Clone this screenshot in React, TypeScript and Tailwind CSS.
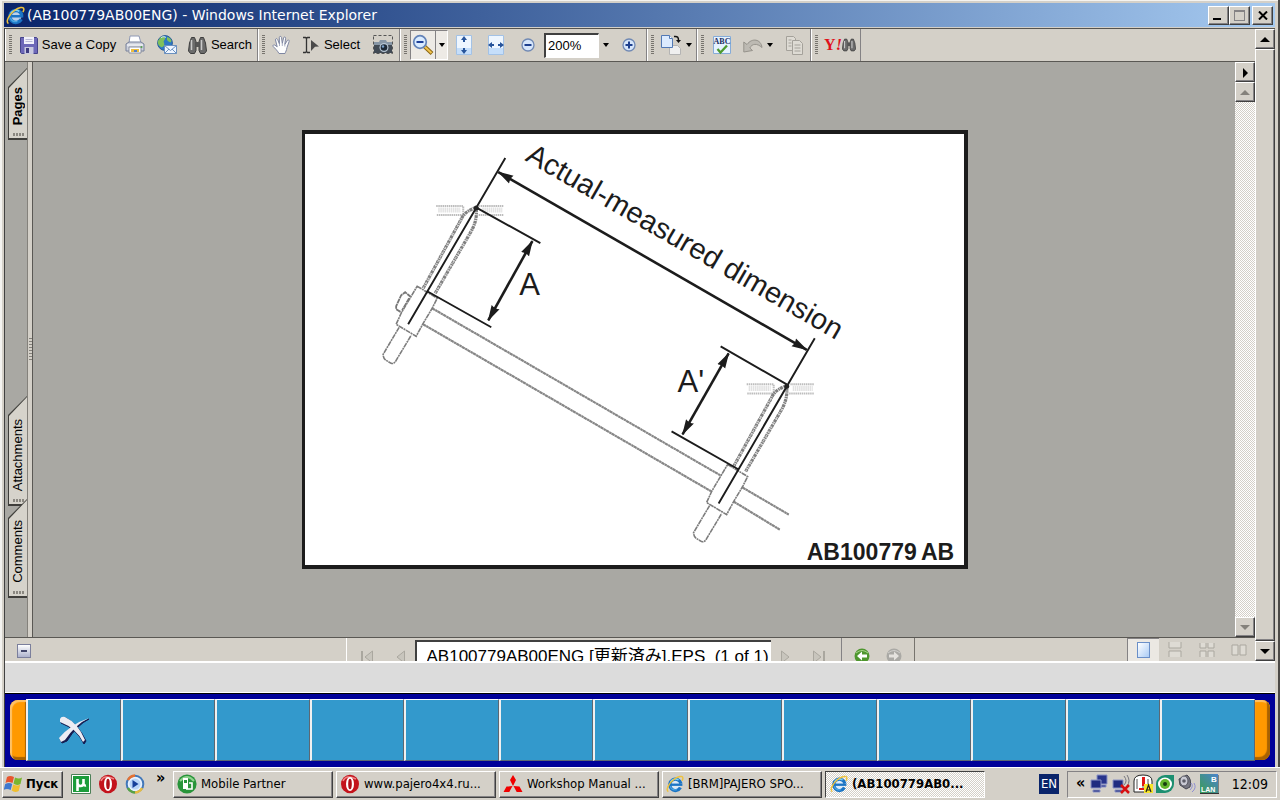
import type { ReactNode } from "react";

const raised =
  "border border-t-white border-l-white border-r-[#404040] border-b-[#404040] shadow-[inset_-1px_-1px_0_#848284] bg-[#d4d0c8]";
const uiFont = "font-['DejaVu_Sans_Condensed','DejaVu_Sans',sans-serif]";
const stipple =
  "bg-[repeating-conic-gradient(#d4d0c8_0_25%,#ffffff_0_50%)] bg-[length:2px_2px]";

function IeIcon({ size = 20 }: { size?: number }) {
  return (
    <svg width={size} height={size} viewBox="0 0 20 20" fill="none" className="shrink-0">
      <circle cx="10.300" cy="10.500" r="6" fill="#dcefff" fillOpacity=".85" />
      <path d="M16 14A6.300 6.300 0 1 1 16.600 9.600" stroke="#1b74c4" strokeWidth="3.600" />
      <path d="M5.500 10.800H18.200" stroke="#1b74c4" strokeWidth="2.600" />
      <path d="M5 7.600C7 4.400 11 3.400 14 5.600" stroke="#7fd0f5" strokeWidth="1.500" />
      <path d="M4.600 12.500C6 15.800 9 17 12 16.200" stroke="#4ba6e2" strokeWidth="1.400" />
      <path d="M2.600 18.400C-.6 16.600 3 9.200 8.600 5 13.400 1.400 18.600 .4 18.800 3.200c.1 1-.3 2-1 3.200" stroke="#eec23c" strokeWidth="1.600" />
    </svg>
  );
}

function Floppy() {
  return (
    <svg width="18" height="18" viewBox="0 0 18 18">
      <path d="M.5 1.500h16l1 1v15H1.500l-1-1z" fill="#6d68b8" stroke="#45438a" />
      <path d="M4 1h10v7H4z" fill="#f2f2fb" />
      <path d="M5.500 3.500h7M5.500 5.500h7" stroke="#b9b9d8" />
      <path d="M4.500 11h9v7h-9z" fill="#c9c9df" />
      <path d="M6 12h3v5H6z" fill="#3d3b80" />
    </svg>
  );
}

function Printer() {
  return (
    <svg width="20" height="20" viewBox="0 0 20 20">
      <path d="M5 1h9l2 7H4z" fill="#fff" stroke="#8f99b5" />
      <path d="M1 9l3-2h12l3 2v7H1z" fill="#cdd1dc" stroke="#77809a" />
      <path d="M2 10h16" stroke="#fff" />
      <path d="M4 12h12v6H4z" fill="#fff" stroke="#8a8f9f" />
      <path d="M6 14h8v3H6z" fill="#edbd3c" />
      <path d="M9 15h3v2H9z" fill="#5580c6" />
      <circle cx="16.500" cy="12" r="1" fill="#54a04b" />
    </svg>
  );
}

function GlobeMail() {
  return (
    <svg width="20" height="20" viewBox="0 0 20 20">
      <circle cx="8" cy="8" r="7.400" fill="#2c78c4" stroke="#285c98" />
      <path d="M3 3c3-3 6-1 5 1s-2 2-1 4-1 5-3 4S0 8 1 6zM10 2c4 1 5 4 4 5s-3-1-4-2z" fill="#7fc05b" />
      <path d="M4 2.500c2-1 4-1 5 0" stroke="#d8f1ff" fill="none" />
      <path d="M7.500 10.500h12v8h-12z" fill="#eef5ff" stroke="#6a90bf" />
      <path d="M7.500 10.500l6 5 6-5M7.500 18.500l4.500-4.500M19.500 18.500L15 14" fill="none" stroke="#6a90bf" />
    </svg>
  );
}

function Binoculars({ size = 19 }: { size?: number }) {
  return (
    <svg width={size} height={size} viewBox="0 0 19 19">
      <path d="M3.500 1.500h3l1.500 4v9l-1.500 3h-4l-2-2.500 1-8z" fill="#6b6b6b" stroke="#3d3d3d" />
      <path d="M12.500 1.500h3l2 5.500 1 8-2 2.500h-4l-1.500-3v-9z" fill="#6b6b6b" stroke="#3d3d3d" />
      <path d="M8 6h3v5H8z" fill="#555" />
      <path d="M3.500 4v10M13.500 4v10" stroke="#c9c9c9" strokeWidth="1.500" />
    </svg>
  );
}

function Hand() {
  return (
    <svg width="20" height="20" viewBox="0 0 20 20">
      <path
        d="M7 18.500C5 15 3 13.500 1.200 11.500c-.8-1.300.7-2.200 1.800-1.300l2.200 1.600L3.500 5c-.3-1.500 1.600-1.900 2.100-.6l1.800 4.400L7.300 2.500c0-1.500 2-1.500 2.200 0l.8 6 1.300-5.700c.4-1.400 2.200-1 2 .5l-.8 6.200 2.500-4c.8-1.200 2.300-.3 1.800 1L15 12.500c-.4 3-1.500 4.500-2 6z"
        fill="#fdfdfd"
        stroke="#7e86a2"
      />
      <path d="M7.500 9v2M10.300 9v2M12.800 9.500v2" stroke="#a9afc4" />
    </svg>
  );
}

function SelectIcon() {
  return (
    <svg width="18" height="18" viewBox="0 0 18 18">
      <path d="M1 1.500h2.500l1 1 1-1H8M1 16.500h2.500l1-1 1 1H8M4.500 2v14" fill="none" stroke="#333" strokeWidth="1.300" />
      <path d="M9 4l8 6.500-4 .3L9 15z" fill="#4a4a4a" />
    </svg>
  );
}

function Camera() {
  return (
    <svg width="20" height="20" viewBox="0 0 20 20">
      <rect x=".5" y=".5" width="19" height="18" fill="none" stroke="#555" strokeDasharray="3 2" />
      <path d="M1 7h5l1-2h6l1 2h5v11H1z" fill="#8796a6" />
      <path d="M1 10h18v8H1z" fill="#414a55" />
      <circle cx="11" cy="12.500" r="4.500" fill="#b8c7d6" />
      <circle cx="11" cy="12.500" r="3.300" fill="#1d2937" />
      <circle cx="10" cy="11.500" r="1.200" fill="#7ba2cd" />
    </svg>
  );
}

function ZoomOut() {
  return (
    <svg width="22" height="22" viewBox="0 0 22 22">
      <path d="M12 12l8 7.500" stroke="#8a6510" strokeWidth="4" />
      <path d="M12 12l7.500 7" stroke="#f1c34f" strokeWidth="2" />
      <circle cx="8" cy="8" r="6.300" fill="#d9ebff" stroke="#6383b8" strokeWidth="1.700" />
      <path d="M4.500 8h7" stroke="#1d3f98" strokeWidth="2" />
    </svg>
  );
}

function FitPage({ wide = false }: { wide?: boolean }) {
  return (
    <svg width="18" height="20" viewBox="0 0 18 20">
      <path d="M1.500.5h15v19h-15z" fill="#eef6ff" stroke="#a3c2e6" />
      <path d="M2 13h14v6H2z" fill="#c5defa" />
      {wide ? (
        <path d="M1 10l4-3v2h2v2H5v2zM17 10l-4-3v2h-2v2h2v2z" fill="#27549b" />
      ) : (
        <path d="M9 1L6 5h2v2h2V5h2zM9 19l-3-4h2v-2h2v2h2z" fill="#27549b" />
      )}
    </svg>
  );
}

function RoundSign({ plus = false }: { plus?: boolean }) {
  return (
    <svg width="14" height="14" viewBox="0 0 14 14">
      <circle cx="7" cy="7" r="6" fill="#d6e6fb" stroke="#7089b4" strokeWidth="1.300" />
      <path d={plus ? "M3.500 7h7M7 3.500v7" : "M3.500 7h7"} stroke="#1d3f8e" strokeWidth="2" />
    </svg>
  );
}

function PageTurn() {
  return (
    <svg width="22" height="20" viewBox="0 0 22 20">
      <path d="M9.500 10.500h8l3 3v6h-11z" fill="#efefef" stroke="#b4b4b4" />
      <path d="M1.500.5h8l3 3v9h-11z" fill="#dcebff" stroke="#5279b5" />
      <path d="M9.500.5v3h3" fill="#fff" stroke="#5279b5" />
      <path d="M14 1.500c4-.5 4.500 1 4.500 4" fill="none" stroke="#111" strokeWidth="1.500" />
      <path d="M16 5h5l-2.500 3z" fill="#111" />
    </svg>
  );
}

function SpellCheck() {
  return (
    <svg width="20" height="20" viewBox="0 0 20 20">
      <path d="M1.500 1.500h17v17h-17z" fill="#e6f2ff" stroke="#86acd9" />
      <text x="10" y="9" textAnchor="middle" className="font-['Liberation_Serif',serif] text-[8px] font-bold" fill="#222e60">
        ABC
      </text>
      <path d="M5.500 14l3 3.500 6.500-7" fill="none" stroke="#4d9a2f" strokeWidth="2.300" />
    </svg>
  );
}

function Undo() {
  return (
    <svg width="20" height="16" viewBox="0 0 20 16">
      <path d="M.8 5v10l8.700-1.500-2.700-2.500C9 6.500 14 6 19 10.500 18 2 9 .5 4 7.500z" fill="#bdbab3" stroke="#96938c" />
    </svg>
  );
}

function CopyIcon() {
  return (
    <svg width="18" height="19" viewBox="0 0 18 19">
      <path d="M1.500.5h7l2 2v12h-9z" fill="#dedbd4" stroke="#a4a19a" />
      <path d="M7.500 4.500h7l3 3v11h-10z" fill="#dedbd4" stroke="#a4a19a" />
      <path d="M3.500 4h3M3.500 7h3M3.500 10h3M9.500 9h6M9.500 12h6M9.500 15h6" stroke="#a4a19a" />
    </svg>
  );
}

function Caret() {
  return <span className="border-x-[3px] border-t-[4px] border-x-transparent border-t-black" />;
}

function Grip() {
  return (
    <span className="mx-[3px] h-5 w-[3px] shrink-0 bg-[repeating-linear-gradient(to_bottom,#77746e_0_1px,transparent_1px_2px)]" />
  );
}

function Tool({ label, className, children }: { label: string; className: string; children: ReactNode }) {
  return (
    <button type="button" aria-label={label} className={`flex h-7 shrink-0 items-center justify-center ${className}`}>
      {children}
    </button>
  );
}

function Group({ className, children }: { className: string; children: ReactNode }) {
  return (
    <div className={`flex h-full shrink-0 items-center border-r border-l border-r-[#848284] border-l-white ${className}`}>
      {children}
    </div>
  );
}

function Toolbar() {
  return (
    <div className="flex h-[34px] shrink-0 items-center border-t border-b border-t-[#55534f] border-b-[#5a5854] font-['Liberation_Sans',sans-serif] text-[13px]">
      <Group className="w-[253px]">
        <Grip />
        <Tool label="Save a Copy" className="w-[106px] gap-1">
          <Floppy />
          <span className="whitespace-nowrap">Save a Copy</span>
        </Tool>
        <Tool label="Print" className="w-7"><Printer /></Tool>
        <Tool label="Email" className="w-9"><GlobeMail /></Tool>
        <Tool label="Search" className="w-[70px] gap-1">
          <Binoculars />
          <span>Search</span>
        </Tool>
      </Group>
      <Group className="w-[142px]">
        <Grip />
        <Tool label="Hand tool" className="w-[28px]"><Hand /></Tool>
        <Tool label="Select" className="w-[70px] gap-1">
          <SelectIcon />
          <span>Select</span>
        </Tool>
        <Tool label="Snapshot" className="w-[34px]"><Camera /></Tool>
      </Group>
      <Group className="w-[247px]">
        <Grip />
        <div className="flex shrink-0 border border-t-[#848284] border-r-white border-b-white border-l-[#848284] bg-[#edeae5]">
          <Tool label="Zoom out tool" className="w-[25px] border-r border-[#848284]"><ZoomOut /></Tool>
          <Tool label="Zoom tools" className="w-[11px]"><Caret /></Tool>
        </div>
        <Tool label="Fit page" className="w-8"><FitPage /></Tool>
        <Tool label="Fit width" className="w-8"><FitPage wide /></Tool>
        <Tool label="Zoom out" className="w-8"><RoundSign /></Tool>
        <input
          aria-label="Zoom level"
          defaultValue="200%"
          className="h-[25px] w-[55px] shrink-0 border border-t-2 border-l-2 border-t-[#404040] border-r-white border-b-white border-l-[#404040] bg-white px-0.5 text-[13px]"
        />
        <Tool label="Zoom levels" className="w-[13px]"><Caret /></Tool>
        <Tool label="Zoom in" className="w-[34px]"><RoundSign plus /></Tool>
      </Group>
      <Group className="w-[50px]">
        <Grip />
        <Tool label="Rotate view" className="w-[37px] gap-1"><PageTurn /><Caret /></Tool>
      </Group>
      <Group className="w-[114px]">
        <Grip />
        <Tool label="Check spelling" className="w-[30px]"><SpellCheck /></Tool>
        <Tool label="Undo" className="w-[41px] gap-1"><Undo /><Caret /></Tool>
        <Tool label="Copy" className="w-8"><CopyIcon /></Tool>
      </Group>
      <Group className="w-[50px]">
        <Grip />
        <Tool label="Yahoo search" className="w-[38px]">
          <span className="font-['Liberation_Serif',serif] text-base font-bold text-[#e0101c]">Y<i>!</i></span>
          <Binoculars size={14} />
        </Tool>
      </Group>
    </div>
  );
}

function Arrow({ dir, muted = false }: { dir: "up" | "down" | "right"; muted?: boolean }) {
  const d = { up: "M0 5l5-5 5 5z", down: "M0 0h10L5 5z", right: "M3-2l5 5-5 5z" }[dir];
  return (
    <svg width="10" height="5" viewBox="0 0 10 5" className="overflow-visible">
      <path d={d} fill={muted ? "#84817b" : "#000"} />
    </svg>
  );
}

function ScrollButton({ dir, muted, label }: { dir: "up" | "down" | "right"; muted?: boolean; label: string }) {
  return (
    <button type="button" aria-label={label} className={`flex h-5 w-full shrink-0 items-center justify-center ${raised}`}>
      <Arrow dir={dir} muted={muted} />
    </button>
  );
}

function SideTab({ label, className }: { label: string; className: string }) {
  return (
    <button
      type="button"
      className={`flex w-[19px] shrink-0 bg-[#3f3e3b] p-px pr-0 pb-0.5 [clip-path:polygon(0_19px,100%_0,100%_100%,0_100%)] ${className}`}
    >
      <span className="flex h-full w-full flex-col items-center justify-end bg-[#d6d3cb] [clip-path:polygon(0_19px,100%_0,100%_100%,0_100%)]">
        <span className="rotate-180 pt-2 text-[13px] leading-4 [writing-mode:vertical-rl]">{label}</span>
        <span className="mb-0.5 h-[3px] w-[11px] bg-[repeating-linear-gradient(to_right,#8a8780_0_2px,transparent_2px_3px)]" />
      </span>
    </button>
  );
}

function Clamp() {
  return (
    <g fill="none" stroke="#7c7c7c" strokeWidth="1.600" strokeDasharray="5 .6 2 .6">
      <g stroke="#bdbdbd" strokeWidth="2" strokeDasharray="1.500 .6">
        <path d="M436 206h27v9h-27M503 206h-24M503 215h-25" />
        <path d="M438 210h22M482 210h20" stroke="#e2e2e2" strokeWidth="5" />
      </g>
      <path d="M423 288L461 219q3-7 13-11M435 293L471 231q6-11 5-21" stroke="#808080" strokeWidth="3.200" strokeDasharray="3 .7 1.500 .5" />
      <path d="M423 288L461 219M435 293L471 231" stroke="#d2d2d2" strokeWidth="1" strokeDasharray="2 3" />
      <path d="M399 327l-16 27q0 4 3 6l5 3q3 1 5-3l15-25" fill="#fff" />
      <path d="M417 286l20 12-5 10-9 15-7 13-20-12 5-11 10-17z" fill="#fff" />
    </g>
  );
}

function Measure({ d }: { d: string }) {
  return <path d={d} fill="none" stroke="#1c1c1c" strokeWidth="2.600" markerStart="url(#tip)" markerEnd="url(#tip)" />;
}

function Diagram() {
  return (
    <svg viewBox="305 134 658 431" className="block w-full" role="img" aria-label="Actual-measured dimension">
      <defs>
        <marker id="tip" orient="auto-start-reverse" markerUnits="userSpaceOnUse" markerWidth="16" markerHeight="10" refX="15" refY="5" viewBox="0 0 16 10">
          <path d="M0 .5L16 5 0 9.500q2-4.500 0-9z" fill="#1c1c1c" />
        </marker>
      </defs>
      <g strokeWidth="2">
        <path d="M432 308L720 475M423 324L711 491M742 487l46 27M733 501l46 28" stroke="#bcbcbc" />
        <path d="M432 308L720 475M423 324L711 491M742 487l46 27M733 501l46 28" stroke="#868686" strokeDasharray="3 .8 2 .6" />
      </g>
      <path d="M411 297l-6-5-4 3-5 11 0 3 5 3 3 2M409 298l-7 12" fill="none" stroke="#777" strokeWidth="1.800" strokeDasharray="5 .6" />
      <Clamp />
      <g transform="translate(310 178)"><Clamp /></g>
      <g stroke="#1c1c1c" strokeWidth="1.900">
        <path d="M505 158L408 324M477 208l63 35M427 291l64 36M814 338L718 503M720 346l66 38M671 431l67 38" />
      </g>
      <circle cx="476" cy="208" r="2.500" fill="#222" />
      <circle cx="786" cy="386" r="2.500" fill="#222" />
      <Measure d="M498 172L806 349.500" />
      <Measure d="M532 241L488 320" />
      <Measure d="M728 353L682 434" />
      <g fill="#1c1c1c" className="font-['Liberation_Sans',sans-serif]">
        <text transform="translate(524 160) rotate(30)" className="text-[29px]">Actual-measured dimension</text>
        <text x="519" y="295" className="text-[31px]">A</text>
        <text x="677" y="392" className="text-[31px]">A'</text>
        <text x="806" y="559" className="text-[23px] font-bold">AB100779</text>
        <text x="920" y="559" className="text-[23px] font-bold">AB</text>
      </g>
    </svg>
  );
}

function PageNav({ flip = false, bar = false, label }: { flip?: boolean; bar?: boolean; label: string }) {
  return (
    <button type="button" aria-label={label} className={`flex w-8 justify-center ${flip ? "-scale-x-100" : ""}`}>
      <svg width="14" height="14" viewBox="0 0 14 14">
        {bar && <path d="M1 1h2v12H1z" fill="#aaa79f" />}
        <path d="M12.500 1v12L5 7z" fill="#c8c5bd" stroke="#aaa79f" />
      </svg>
    </button>
  );
}

function RoundArrow({ back = false }: { back?: boolean }) {
  return (
    <button type="button" aria-label={back ? "Previous view" : "Next view"} className={`flex w-8 justify-center ${back ? "" : "-scale-x-100"}`}>
      <svg width="16" height="16" viewBox="0 0 16 16">
        <circle cx="8" cy="8" r="7.500" fill={back ? "#4e962e" : "#aaa9a5"} />
        <path d="M2 5q6-5 12 0" fill="none" stroke={back ? "#a6d488" : "#cfcecb"} />
        <path d="M3 8l5-4.500v3h5v3H8v3z" fill={back ? "#fff" : "#e4e2de"} />
      </svg>
    </button>
  );
}

const layouts = [
  { label: "Continuous", d: "M2 0v6h12V0M2 15V9h12v6" },
  { label: "Continuous facing", d: "M1 1v5h6V1M9 1v5h6V1M1 15V9h6v6M9 15V9h6v6" },
  { label: "Facing", d: "M1 3h6v10H1zM9 3h6v10H9z" },
];

function StatusBar() {
  return (
    <div className="flex h-6 shrink-0 overflow-hidden border-t border-[#5a5854] bg-[#d4d0c8]">
      <div className="flex min-w-0 flex-1 basis-0 items-start">
        <button type="button" aria-label="Hide pane" className="mt-1.5 ml-3 flex size-[14px] items-center justify-center border border-[#7b7f9c] bg-gradient-to-b from-white to-[#adb2cc]">
          <span className="h-0.5 w-1.5 bg-[#42466a]" />
        </button>
      </div>
      <div className="flex shrink-0 items-start border-x border-r-[#77746e] border-l-white">
        <div className="flex pt-3 pl-1">
          <PageNav label="First page" bar />
          <PageNav label="Previous page" />
        </div>
        <input
          aria-label="Current page"
          readOnly
          defaultValue="AB100779AB00ENG [更新済み].EPS  (1 of 1)"
          className="mt-0.5 h-[26px] w-[356px] border-t-2 border-l-2 border-[#404040] bg-white pl-2.5 font-['Liberation_Sans','Noto_Sans_CJK_JP',sans-serif] text-[17px] leading-6"
        />
        <div className="flex pt-3">
          <PageNav label="Next page" flip />
          <PageNav label="Last page" flip bar />
        </div>
        <div className="ml-1.5 flex border-l border-[#848284] pt-2.5 pl-1 pr-1">
          <RoundArrow back />
          <RoundArrow />
        </div>
      </div>
      <div className="flex min-w-0 flex-1 basis-0 justify-end">
        <button type="button" aria-label="Single page" className="flex w-8 items-center justify-center border-t border-l border-[#848284] bg-[#ebe8e3]">
          <span className="h-4 w-[13px] border border-[#6a8fc8] bg-gradient-to-br from-white to-[#abccf5]" />
        </button>
        {layouts.map((l) => (
          <button key={l.label} type="button" aria-label={l.label} className="flex w-8 items-center justify-center">
            <svg width="16" height="16" viewBox="0 0 16 16">
              <path d={l.d} fill="#dedbd4" stroke="#aaa79f" />
            </svg>
          </button>
        ))}
      </div>
    </div>
  );
}

function TitleBar() {
  return (
    <div className="flex h-6 shrink-0 items-center bg-gradient-to-r from-[#0a246a] to-[#a6caf0] px-0.5 text-white">
      <IeIcon size={19} />
      <h1 className="ml-0.5 flex-1 font-['DejaVu_Sans',sans-serif] text-[14px] leading-5">
        (AB100779AB00ENG) - Windows Internet Explorer
      </h1>
      <button type="button" aria-label="Minimize" className={`flex h-[19px] w-[21px] items-end pb-1 pl-1 ${raised}`}>
        <span className="h-0.5 w-2 bg-black" />
      </button>
      <button type="button" aria-label="Maximize" className={`mr-0.5 flex h-[19px] w-[21px] items-center justify-center ${raised}`}>
        <span className="size-[11px] border border-t-2 border-[#848284]" />
      </button>
      <button type="button" aria-label="Close" className={`flex h-[19px] w-[21px] items-center justify-center ${raised}`}>
        <svg width="10" height="9" viewBox="0 0 10 9">
          <path d="M1 .5l8 8M9 .5l-8 8" stroke="#000" strokeWidth="2" />
        </svg>
      </button>
    </div>
  );
}

function CommandStrip() {
  return (
    <div className="flex h-[74px] shrink-0 border-t border-black bg-[#000099] px-[5px] pt-[5px] pb-1.5">
      <span className="my-px w-4 shrink-0 rounded-l-lg bg-[#ff9900] shadow-[inset_2px_2px_1px_#ffc266,inset_-1px_-3px_1px_#a86200]" />
      <div className="grid flex-1 grid-cols-13">
        {Array.from({ length: 13 }, (_, i) => (
          <button
            key={i}
            type="button"
            aria-label={i === 0 ? "Close" : `Command ${i + 1}`}
            className="flex items-center justify-center border-t border-r border-b border-l-2 border-t-white border-r-[#5b6873] border-b-[#5b6873] border-l-[#f0f0f0] bg-[#3399cc]"
          >
            {i === 0 && (
              <svg width="32" height="30" viewBox="0 0 32 30">
                <path d="M3 5Q4 2 8 3q12 6 20 23l-2 3Q19 14 3 8zM31 4Q19 10 9 26l-5 2-2-4Q14 10 31 4z" fill="#151b50" stroke="#151b50" />
                <path d="M2 4Q3 1 7 2q13 6 20 23l-2 2Q18 13 2 7zM31 3Q18 9 7 25l-4 2-2-4Q13 9 31 3z" fill="#ececf3" />
              </svg>
            )}
          </button>
        ))}
      </div>
      <span className="my-px w-[15px] shrink-0 rounded-r-lg bg-[#ff9900] shadow-[inset_-3px_-3px_1px_#a86200,inset_0_2px_1px_#ffc266]" />
    </div>
  );
}

function OperaIcon() {
  return (
    <svg width="20" height="20" viewBox="0 0 20 20" className="shrink-0">
      <ellipse cx="10" cy="10" rx="9" ry="9.300" fill="#c4131c" />
      <path d="M3 7q3-7 13-2" fill="none" stroke="#ef8585" strokeWidth="1.500" />
      <ellipse cx="10" cy="10" rx="4" ry="7" fill="#fff" />
      <ellipse cx="10" cy="10" rx="1.800" ry="5.300" fill="#b00f18" />
    </svg>
  );
}

function MobileIcon() {
  return (
    <svg width="20" height="20" viewBox="0 0 20 20" className="shrink-0">
      <circle cx="10" cy="10" r="9.600" fill="#28943a" />
      <path d="M3 7q7-8 14 0" fill="none" stroke="#8ed38e" strokeWidth="2" />
      <path d="M6 4h5v11H6z" fill="#fff" />
      <path d="M7 6h3v3H7z" fill="#28943a" />
      <path d="M12 9h3v6H9" fill="none" stroke="#fff" strokeWidth="1.600" />
    </svg>
  );
}

function MitsubishiIcon() {
  return (
    <svg width="20" height="20" viewBox="0 0 20 20" className="shrink-0" fill="#f00000">
      <path d="M10 1l3 5-3 6-3-6zM9.500 12l-3.200 6H.5l3-5.500zM10.500 12l6 .5 3 5.500h-5.800z" />
    </svg>
  );
}

const tasks = [
  { label: "Mobile Partner", icon: <MobileIcon /> },
  { label: "www.pajero4x4.ru...", icon: <OperaIcon /> },
  { label: "Workshop Manual ...", icon: <MitsubishiIcon /> },
  { label: "[BRM]PAJERO SPO...", icon: <IeIcon size={18} /> },
  { label: "(AB100779AB0...", icon: <IeIcon size={18} />, active: true },
];

function Monitors({ off = false }: { off?: boolean }) {
  return (
    <svg width="20" height="20" viewBox="0 0 20 20">
      {off ? (
        <path d="M13 2q4 5 0 9M16 1q4 6 0 11" fill="none" stroke="#77777f" />
      ) : (
        <path d="M8 1h10v9H8zM11 11h6v2h-6z" fill="#29358c" stroke="#8b93c4" />
      )}
      <path d="M2 6h10v8H2zM4 16h7v2H4z" fill="#202c80" stroke="#8b93c4" />
      {off && <path d="M10 11l8 8M18 11l-8 8" stroke="#d81010" strokeWidth="2.500" />}
    </svg>
  );
}

function TrayIcons() {
  return (
    <div className="flex items-center gap-0.5">
      <Monitors />
      <Monitors off />
      <svg width="20" height="20" viewBox="0 0 20 20">
        <path d="M1 18V7q0-6 9-6t9 6v11z" fill="#fff" stroke="#222" />
        <path d="M4 15V5M15 12V5M10 5v9" stroke="#555" />
        <path d="M9 3h3v9H9zM6 14h5v2H6z" fill="#e01818" />
        <path d="M11 10h9v9h-9z" fill="#f7e529" />
        <path d="M13 18l2.500-7 2.500 7M14 16h3" fill="none" stroke="#222" strokeWidth="1.200" />
      </svg>
      <svg width="20" height="20" viewBox="0 0 20 20">
        <path d="M1 10a9 9 0 0 1 9-9h9v9a9 9 0 0 1-9 9H1z" fill="#1d8f70" />
        <ellipse cx="10" cy="10" rx="7" ry="6.500" fill="#fff" />
        <circle cx="10" cy="10" r="5" fill="#62b62c" />
        <circle cx="10" cy="10" r="2" fill="#173c10" />
      </svg>
      <svg width="20" height="20" viewBox="0 0 20 20">
        <path d="M2 5l8-4q5 4 3 12l-4 2-6-4z" fill="#777782" stroke="#454550" />
        <ellipse cx="7" cy="7" rx="4" ry="5" fill="#c9c9d3" stroke="#55555f" />
        <circle cx="7" cy="7" r="1.800" fill="#5d5d68" />
        <path d="M14 9q3 3-1 7M17 9q3 5-2 9" fill="none" stroke="#8e8ed2" />
      </svg>
      <svg width="20" height="20" viewBox="0 0 20 20">
        <defs>
          <linearGradient id="lan" x1="0" y1="1" x2="1" y2="0">
            <stop offset="0" stopColor="#3a9c55" />
            <stop offset="1" stopColor="#4b83cc" />
          </linearGradient>
        </defs>
        <path d="M1 0h18v19H1z" fill="url(#lan)" />
        <path d="M1 19.500h19V1" fill="none" stroke="#333" />
        <g fill="#fff" className="font-['Liberation_Sans',sans-serif] font-bold">
          <text x="12" y="8" className="text-[8px]">B</text>
          <text x="2" y="18" className="text-[7px]">LAN</text>
        </g>
      </svg>
    </div>
  );
}

function Taskbar() {
  return (
    <footer className={`flex h-[33px] shrink-0 items-center border-t border-white bg-[#d4d0c8] pr-0.5 pl-0.5 ${uiFont} text-[14px]`}>
      <button type="button" className={`flex h-[27px] w-[61px] shrink-0 items-center gap-0.5 px-px font-bold ${raised}`}>
        <svg width="20" height="20" viewBox="0 0 20 20" className="shrink-0">
          <path d="M3 3q3-2 7 0L8.500 9q-4-2-7 0z" fill="#e8552d" />
          <path d="M11 3.500q4 2 7 0L16.500 10q-4 2-7-.5z" fill="#79b62f" />
          <path d="M1.200 10q4-2 7 0L6.700 16q-4-2-7 0z" fill="#3f79cf" />
          <path d="M9.200 10.500q4 2 7 .3L14.700 17q-4 2-7-.5z" fill="#f0bf2f" />
        </svg>
        <span className="text-[13px]">Пуск</span>
      </button>
      <nav aria-label="Quick launch" className="ml-2 flex w-[102px] shrink-0 items-center gap-[7px]">
        <button type="button" aria-label="Torrents">
          <svg width="20" height="20" viewBox="0 0 20 20">
            <path d="M.5.500h19v19H.5z" fill="#fff" stroke="#4c8057" />
            <path d="M2 2h16v16H2z" fill="#1c9c3a" />
            <path d="M6.500 17V5M6.500 5v4q0 3 3 3t3-3V5M12.500 9q0 3 2.500 2.500" fill="none" stroke="#fff" strokeWidth="2.600" />
          </svg>
        </button>
        <button type="button" aria-label="Opera"><OperaIcon /></button>
        <button type="button" aria-label="Media player">
          <svg width="20" height="20" viewBox="0 0 20 20">
            <circle cx="10" cy="10" r="8.300" fill="#e8f2ff" stroke="#4278b9" strokeWidth="2" />
            <path d="M3 6q2-4 7-4.500" fill="none" stroke="#e57132" strokeWidth="2.500" />
            <path d="M3 14q2 4 7 4.500" fill="none" stroke="#58a344" strokeWidth="2.500" />
            <path d="M17 14q-2 4-7 4.500" fill="none" stroke="#e7bc3e" strokeWidth="2.500" />
            <circle cx="10" cy="10" r="5.500" fill="#b9d5f7" />
            <path d="M7.500 6l6 4-6 4z" fill="#153f9a" />
          </svg>
        </button>
        <button type="button" aria-label="More shortcuts" className="-mt-3 ml-1 text-base leading-4 font-bold">»</button>
      </nav>
      <div className="flex min-w-0 flex-1 gap-[3px]">
        {tasks.map((t) => (
          <button
            key={t.label}
            type="button"
            className={
              t.active
                ? `flex h-[27px] min-w-0 max-w-40 flex-1 items-center gap-1 border border-t-[#404040] border-r-white border-b-white border-l-[#404040] px-1 font-bold ${stipple}`
                : `flex h-[27px] min-w-0 max-w-40 flex-1 items-center gap-1 px-[3px] ${raised}`
            }
          >
            {t.icon}
            <span className="overflow-hidden text-[13px] whitespace-nowrap">{t.label}</span>
          </button>
        ))}
      </div>
      <button type="button" className="mr-2 h-5 w-5 shrink-0 bg-[#0a246a] text-center text-[13px] text-white">EN</button>
      <div className="mr-px flex h-[27px] w-[210px] shrink-0 items-center border border-t-[#848284] border-r-white border-b-white border-l-[#848284] pr-2 pl-2">
        <button type="button" aria-label="Show hidden icons" className="mr-1 -mt-0.5 text-[16px] leading-4 font-bold">«</button>
        <TrayIcons />
        <time className="ml-auto text-[14px]">12:09</time>
      </div>
    </footer>
  );
}

export default function App() {
  return (
    <div className="flex min-h-screen flex-col bg-[#d4d0c8] text-black">
      <main className="flex flex-1 flex-col border-r-2 border-[#4c4a47] pt-[3px] pr-[3px] pl-1 shadow-[inset_2px_1px_0_#f4f3f0]">
        <TitleBar />
        <div className="mt-px flex flex-1 flex-col border-l border-[#404040]">
          <div className="flex flex-1">
            <div className="flex min-w-0 flex-1 flex-col">
              <Toolbar />
              <div className="flex flex-1 bg-[#a9a8a3]">
                <aside className="flex w-[22px] shrink-0 flex-col items-end pt-1.5 pb-[39px] font-['Liberation_Sans',sans-serif]">
                  <SideTab label="Pages" className="h-[72px] font-bold" />
                  <SideTab label="Attachments" className="mt-auto h-[110px]" />
                  <SideTab label="Comments" className="-mt-[7px] h-[99px]" />
                </aside>
                <div className="flex w-1.5 shrink-0 items-center justify-center border-x border-r-[#5a5854] border-l-[#84817b] bg-[#d4d0c8]">
                  <span className="h-6 w-[3px] bg-[repeating-linear-gradient(to_bottom,#84817b_0_1px,transparent_1px_3px)]" />
                </div>
                <section className="flex min-w-0 flex-1 items-center justify-center pl-px">
                  <div className="w-[666px] max-w-full border-[3px] border-t-4 border-r-4 border-b-4 border-[#1c1c1c] bg-white">
                    <Diagram />
                  </div>
                </section>
                <div className={`flex w-5 shrink-0 flex-col ${stipple}`}>
                  <ScrollButton dir="right" label="Document menu" />
                  <ScrollButton dir="up" muted label="Scroll document up" />
                  <div className="flex-1" />
                  <ScrollButton dir="down" muted label="Scroll document down" />
                </div>
              </div>
              <StatusBar />
            </div>
            <div className="flex w-5 shrink-0 flex-col border-t border-[#55534f]">
              <ScrollButton dir="up" label="Scroll up" />
              <div className={`flex-1 ${raised}`} />
              <ScrollButton dir="down" label="Scroll down" />
            </div>
          </div>
          <div className="h-8 shrink-0 border-t-2 border-b border-white bg-[#dcdcdc]" />
          <CommandStrip />
        </div>
      </main>
      <Taskbar />
    </div>
  );
}
